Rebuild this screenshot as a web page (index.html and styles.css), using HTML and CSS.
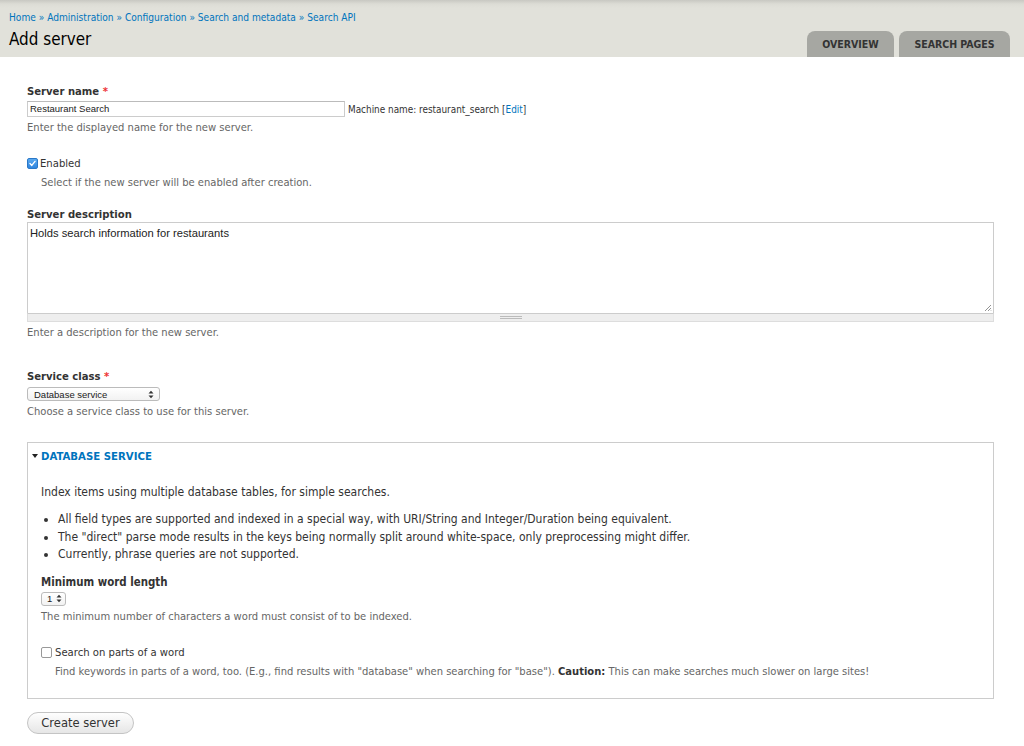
FILE: index.html
```html
<!DOCTYPE html>
<html>
<head>
<meta charset="utf-8">
<link rel="stylesheet" href="styles.css">
</head>
<body>
<div class="header">
  <div class="head-left">
    <div class="breadcrumb"><a>Home</a> » <a>Administration</a> » <a>Configuration</a> » <a>Search and metadata</a> » <a>Search API</a></div>
    <h1>Add server</h1>
  </div>
  <ul class="tabs">
    <li class="tab tab-overview">OVERVIEW</li>
    <li class="tab tab-pages">SEARCH PAGES</li>
  </ul>
</div>
<div class="content">
  <div class="item item-name">
    <div class="label">Server name <span class="req">*</span></div>
    <div class="name-row">
      <div class="input">Restaurant Search</div>
      <span class="machine">Machine name: restaurant_search [<a>Edit</a>]</span>
    </div>
    <div class="desc">Enter the displayed name for the new server.</div>
  </div>

  <div class="item item-enabled">
    <div class="check-row">
      <span class="cb cb-on"><svg width="9" height="9" viewBox="0 0 9 9"><path d="M2 4.6 L3.8 6.4 L7 2.4" fill="none" stroke="#fff" stroke-width="1.4" stroke-linecap="round" stroke-linejoin="round"/></svg></span>
      <span class="check-label">Enabled</span>
    </div>
    <div class="desc desc-indent">Select if the new server will be enabled after creation.</div>
  </div>

  <div class="item item-descr">
    <div class="label">Server description</div>
    <div class="textarea">Holds search information for restaurants
      <svg class="resize" width="8" height="8" viewBox="0 0 8 8"><path d="M1 7 L7 1 M4 7 L7 4 M6.5 7 L7 6.5" stroke="#888" stroke-width="0.9"/></svg>
    </div>
    <div class="grippie"><span class="grip"></span></div>
    <div class="desc">Enter a description for the new server.</div>
  </div>

  <div class="item item-class">
    <div class="label">Service class <span class="req">*</span></div>
    <div class="select select-class"><span>Database service</span>
      <svg width="6" height="9" viewBox="0 0 6 9"><path d="M0.5 3.5 L3 0.8 L5.5 3.5 Z M0.5 5.5 L3 8.2 L5.5 5.5 Z" fill="#333"/></svg>
    </div>
    <div class="desc">Choose a service class to use for this server.</div>
  </div>

  <div class="fieldset">
    <div class="legend"><svg width="6" height="4" viewBox="0 0 6 4"><path d="M0 0 L6 0 L3 4 Z" fill="#222"/></svg><span>DATABASE SERVICE</span></div>
    <p class="intro">Index items using multiple database tables, for simple searches.</p>
    <ul class="bullets">
      <li>All field types are supported and indexed in a special way, with URI/String and Integer/Duration being equivalent.</li>
      <li>The "direct" parse mode results in the keys being normally split around white-space, only preprocessing might differ.</li>
      <li>Currently, phrase queries are not supported.</li>
    </ul>
    <div class="item item-min">
      <div class="label">Minimum word length</div>
      <div class="select select-min"><span>1</span>
        <svg width="6" height="9" viewBox="0 0 6 9"><path d="M0.5 3.5 L3 0.8 L5.5 3.5 Z M0.5 5.5 L3 8.2 L5.5 5.5 Z" fill="#333"/></svg>
      </div>
      <div class="desc">The minimum number of characters a word must consist of to be indexed.</div>
    </div>
    <div class="item item-partial">
      <div class="check-row">
        <span class="cb cb-off"></span>
        <span class="check-label">Search on parts of a word</span>
      </div>
      <div class="desc desc-indent2">Find keywords in parts of a word, too. (E.g., find results with "database" when searching for "base"). <b>Caution:</b> This can make searches much slower on large sites!</div>
    </div>
  </div>

  <div class="actions"><span class="button">Create server</span></div>
</div>
</body>
</html>
```
FILE: styles.css
```css
html, body {
  margin: 0;
  padding: 0;
  background: #fff;
}
body {
  font-family: "DejaVu Sans Condensed", "DejaVu Sans", sans-serif;
  font-stretch: condensed;
  color: #333;
  font-size: 11px;
}
a { color: #0074bd; text-decoration: none; }

.header {
  height: 57px;
  background: linear-gradient(to bottom, #c8c8c2 0px, #dcdcd5 4px, #e1e1da 8px, #e1e1da 100%);
  display: flex;
  justify-content: space-between;
  align-items: flex-end;
}
.head-left {
  align-self: flex-start;
  padding: 11px 0 0 9px;
}
.breadcrumb {
  font-size: 10.1px;
  line-height: 14px;
  color: #0074bd;
}
h1 {
  margin: 4px 0 0 0;
  font-size: 16.9px;
  font-weight: normal;
  color: #000;
  line-height: 20px;
}
.tabs {
  list-style: none;
  margin: 0 14px 0 0;
  padding: 0;
  display: flex;
  gap: 5px;
}
.tab {
  height: 26px;
  line-height: 27px;
  background: #a6a7a2;
  border-radius: 8px 8px 0 0;
  text-align: center;
  font-weight: bold;
  font-size: 10.5px;
  color: #333;
}
.tab-overview { width: 87px; }
.tab-pages { width: 111px; }

.content {
  padding: 27px 30px 0 27px;
}
.label {
  font-weight: bold;
  font-size: 11.2px;
  line-height: 16px;
  color: #333;
}
.req { color: #e33; }
.desc {
  font-size: 11.1px;
  line-height: 16px;
  color: #666;
}
.desc-indent { padding-left: 14px; margin-top: 4px; }
.desc-indent2 { padding-left: 14px; margin-top: 3px; }

.item-name .name-row {
  display: flex;
  align-items: center;
  margin-top: 1px;
}
.input {
  width: 314px;
  height: 14px;
  border: 1px solid #ccc;
  border-top-color: #bbb;
  padding: 0 0 0 2px;
  font-family: "Liberation Sans", sans-serif;
  font-stretch: normal;
  font-size: 9.5px;
  line-height: 14px;
  color: #222;
}
.machine {
  font-size: 9.9px;
  margin-left: 3px;
  color: #333;
}
.item-name .desc { margin-top: 3px; }

.item-enabled { margin-top: 19px; }
.check-row {
  display: flex;
  align-items: center;
  height: 16px;
}
.cb {
  width: 11px;
  height: 11px;
  box-sizing: border-box;
  border-radius: 2px;
  display: inline-flex;
  align-items: center;
  justify-content: center;
  margin-right: 2px;
}
.cb-on {
  background: linear-gradient(#5aa9f0, #2f86e0);
  border: 1px solid #2a78c8;
}
.cb-off {
  background: #fff;
  border: 1px solid #999;
}
.check-label { font-size: 11.2px; color: #333; }

.item-descr { margin-top: 16px; }
.item-descr .label { line-height: 15px; }
.textarea {
  position: relative;
  border: 1px solid #ccc;
  border-bottom: none;
  font-family: "Liberation Sans", sans-serif;
  font-stretch: normal;
  font-size: 11.2px;
  line-height: 14px;
  padding: 3px 0 0 2px;
  box-sizing: border-box;
  height: 91px;
  color: #222;
}
.resize {
  position: absolute;
  right: 1px;
  bottom: 1px;
}
.grippie {
  height: 9px;
  background: #eee;
  border: 1px solid #ddd;
  border-top-color: #ccc;
  box-sizing: border-box;
  display: flex;
  justify-content: center;
  align-items: center;
}
.grip {
  width: 22px;
  height: 1px;
  border-top: 1px solid #bbb;
  border-bottom: 1px solid #bbb;
}
.item-descr .desc { margin-top: 3px; }

.item-class { margin-top: 28px; }
.select {
  display: flex;
  align-items: center;
  justify-content: space-between;
  box-sizing: border-box;
  height: 14px;
  border: 1px solid #bbb;
  border-radius: 3px;
  background: linear-gradient(#fff, #f2f2f2);
  font-family: "Liberation Sans", sans-serif;
  font-stretch: normal;
  font-size: 9.5px;
  color: #222;
  padding: 0 5px 0 6px;
  margin-top: 2px;
}
.select-class { width: 133px; }
.select-min { width: 25px; padding: 0 3px 0 5px; }
.item-class .desc { margin-top: 3px; }

.fieldset {
  margin-top: 22px;
  border: 1px solid #ccc;
  height: 257px;
  box-sizing: border-box;
  padding: 0 0 0 13px;
}
.legend {
  display: flex;
  align-items: center;
  margin-left: -9px;
  height: 16px;
  margin-top: 5px;
  font-weight: bold;
  font-size: 11.3px;
  color: #0074bd;
}
.legend svg { margin-right: 3px; }
.intro {
  margin: 20px 0 0 0;
  font-size: 12px;
  line-height: 16px;
}
.bullets {
  margin: 11px 0 0 0;
  padding: 0 0 0 17px;
  font-size: 12px;
  line-height: 17.5px;
}
.item-min { margin-top: 10px; }
.item-min .label { font-size: 11.4px; }
.item-min .desc { margin-top: 3px; }
.item-partial { margin-top: 20px; }
.item-partial .check-row .cb { margin-right: 3px; }
.item-partial .desc { margin-top: 3px; }
.item-partial b { color: #333; }

.actions { margin-top: 13px; }
.button {
  display: inline-block;
  width: 107px;
  height: 22px;
  box-sizing: border-box;
  border: 1px solid #c4c4c4;
  border-radius: 11px;
  background: linear-gradient(#fefefe, #e6e6e6);
  text-align: center;
  font-size: 12.8px;
  line-height: 20px;
  color: #333;
}
```
